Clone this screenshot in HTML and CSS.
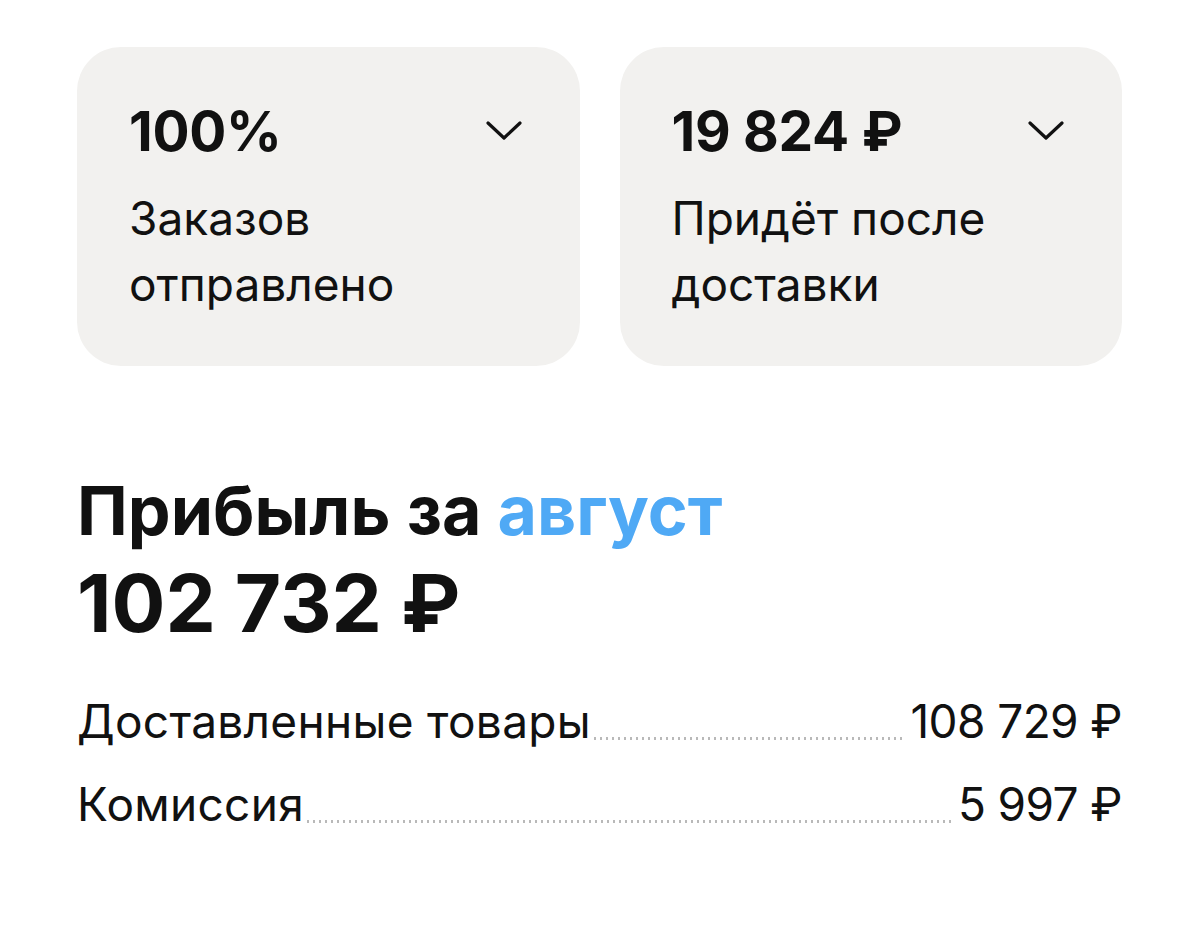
FILE: index.html
```html
<!DOCTYPE html>
<html lang="ru">
<head>
    <meta charset="UTF-8">
    <meta name="viewport" content="width=device-width, initial-scale=1.0">
    <title>Прибыль за август</title>
    <link rel="stylesheet" href="styles.css">
</head>
<body>
    <div class="page">
        <div class="cards">
            <div class="card">
                <div class="card-head">
                    <span class="card-value">100%</span>
                    <svg class="chevron" viewBox="0 0 36 20" width="36" height="20">
                        <path d="M2 2 L18 17 L34 2" fill="none" stroke="#111" stroke-width="3.2" stroke-linecap="round" stroke-linejoin="round"/>
                    </svg>
                </div>
                <div class="card-label">Заказов<br>отправлено</div>
            </div>
            <div class="card">
                <div class="card-head">
                    <span class="card-value">19 824 ₽</span>
                    <svg class="chevron" viewBox="0 0 36 20" width="36" height="20">
                        <path d="M2 2 L18 17 L34 2" fill="none" stroke="#111" stroke-width="3.2" stroke-linecap="round" stroke-linejoin="round"/>
                    </svg>
                </div>
                <div class="card-label">Придёт после<br>доставки</div>
            </div>
        </div>

        <div class="profit">
            <h1 class="profit-title">Прибыль за <span class="month">август</span></h1>
            <div class="profit-sum">102 732 ₽</div>

            <div class="rows">
                <div class="row">
                    <span class="row-label">Доставленные товары</span>
                    <span class="leader"></span>
                    <span class="row-value">108 729 ₽</span>
                </div>
                <div class="row">
                    <span class="row-label">Комиссия</span>
                    <span class="leader"></span>
                    <span class="row-value">5 997 ₽</span>
                </div>
            </div>
        </div>
    </div>
</body>
</html>
```

FILE: styles.css
```css
body {
    margin: 0;
    background-color: #FFFFFF;
    color: #111111;
    font-family: Inter, "Noto Sans", sans-serif;
}
.page {
    padding: 47px 78px 0 77px;
}
.cards {
    display: grid;
    grid-template-columns: 1fr 1fr;
    gap: 40px;
}
.card {
    background-color: #F2F1EF;
    border-radius: 44px;
    height: 319px;
    box-sizing: border-box;
    padding: 46px 58px 0 52px;
}
.card-head {
    display: flex;
    justify-content: space-between;
    align-items: center;
}
.card-value {
    font-size: 55px;
    font-weight: 700;
    line-height: 76px;
    letter-spacing: -0.3px;
}
.chevron {
    display: block;
}
.card-label {
    font-size: 46px;
    line-height: 66px;
    margin-top: 16px;
}
.profit {
    margin-top: 104px;
}
.profit-title {
    margin: 0;
    font-size: 68px;
    font-weight: 700;
    line-height: 80px;
    letter-spacing: 0;
}
.month {
    color: #4FA9F5;
}
.profit-sum {
    margin-top: 8px;
    font-size: 80px;
    font-weight: 700;
    line-height: 90px;
    letter-spacing: 0;
}
.rows {
    margin-top: 32px;
}
.row {
    display: flex;
    align-items: baseline;
    font-size: 46px;
    line-height: 83px;
}
.row-label {
    letter-spacing: 0.3px;
}
.row-value {
    letter-spacing: -0.6px;
}
.leader {
    flex: 1;
    height: 3px;
    margin: 0 6px 0 3px;
    position: relative;
    top: 2px;
    background-image: linear-gradient(to right, #B9B9B9 2px, transparent 2px);
    background-size: 6px 3px;
    background-repeat: repeat-x;
}
```
